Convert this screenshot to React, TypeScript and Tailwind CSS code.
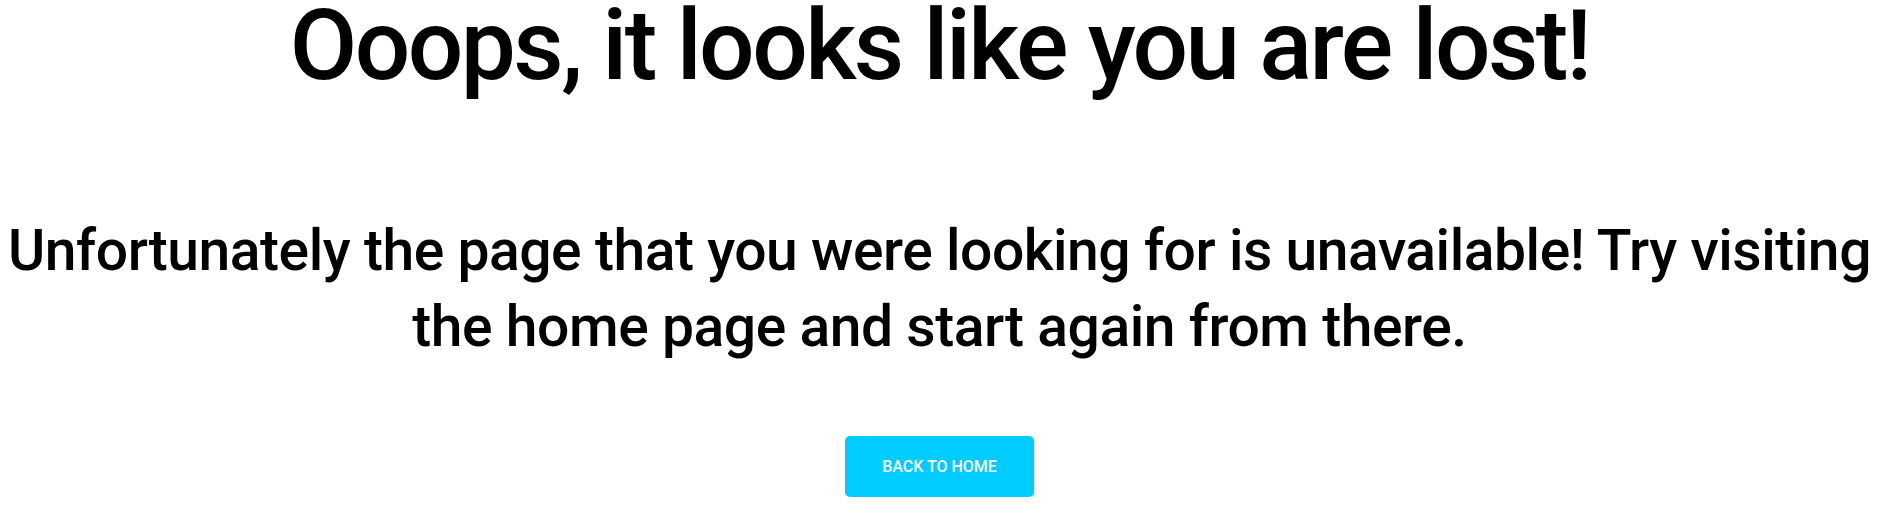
import React from "react";

export default function App() {
  return (
    <div
      className="w-full min-h-[505px] bg-white flex flex-col items-center text-black text-center"
      style={{ fontFamily: "Roboto, 'Noto Sans', sans-serif" }}
    >
      <h1 className="text-[98px] leading-[92px] font-medium tracking-[-0.026em] whitespace-nowrap">
        Ooops, it looks like you are lost!
      </h1>
      <p className="mt-[121px] w-full text-[57px] leading-[76px] font-medium tracking-[-0.008em]">
        Unfortunately the page that you were looking for is unavailable! Try visiting the home page and start again from there.
      </p>
      <a
        href="#"
        className="mt-[71px] w-[189px] h-[61px] rounded-[5px] bg-[#00ccff] text-white text-[16px] font-medium uppercase flex items-center justify-center"
      >
        Back to home
      </a>
    </div>
  );
}
